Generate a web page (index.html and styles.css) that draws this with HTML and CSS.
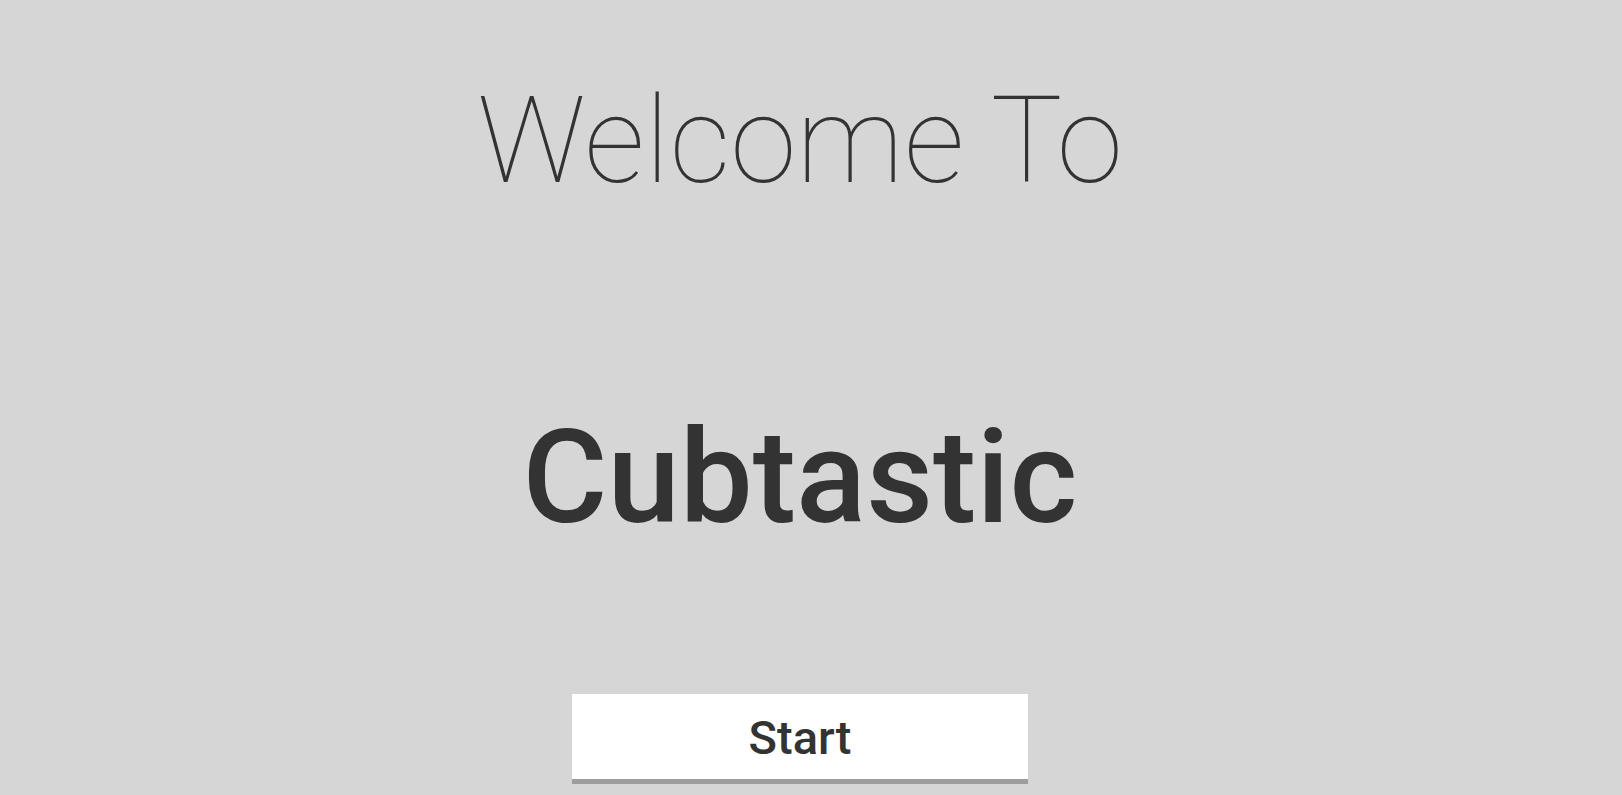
FILE: index.html
```html
<!DOCTYPE html>
<html>
<head>
<meta charset="utf-8">
<link rel="stylesheet" href="styles.css">
</head>
<body>
<main class="screen">
  <h1 class="welcome">Welcome To</h1>
  <h2 class="title">Cubtastic</h2>
  <button class="start">Start</button>
</main>
</body>
</html>
```
FILE: styles.css
```css
html, body {
  margin: 0;
  padding: 0;
  background: #d6d6d6;
}
body {
  height: 795px;
  overflow: hidden;
  font-family: Roboto, "Noto Sans", sans-serif;
  color: #333333;
}
.screen {
  width: 1600px;
  display: flex;
  flex-direction: column;
  align-items: center;
}
.welcome {
  margin: 81px 0 0;
  font-size: 120px;
  font-weight: 100;
  line-height: 1;
}
.title {
  margin: 212px 0 0;
  font-size: 130px;
  font-weight: 500;
  line-height: 1;
}
.start {
  margin-top: 151px;
  width: 456px;
  height: 90px;
  padding: 3px 0 0;
  border: 0;
  border-bottom: 5px solid #9e9e9e;
  background: #ffffff;
  color: #333333;
  font-family: Roboto, "Noto Sans", sans-serif;
  font-size: 47px;
  font-weight: 500;
  line-height: 82px;
  box-sizing: border-box;
}
```
